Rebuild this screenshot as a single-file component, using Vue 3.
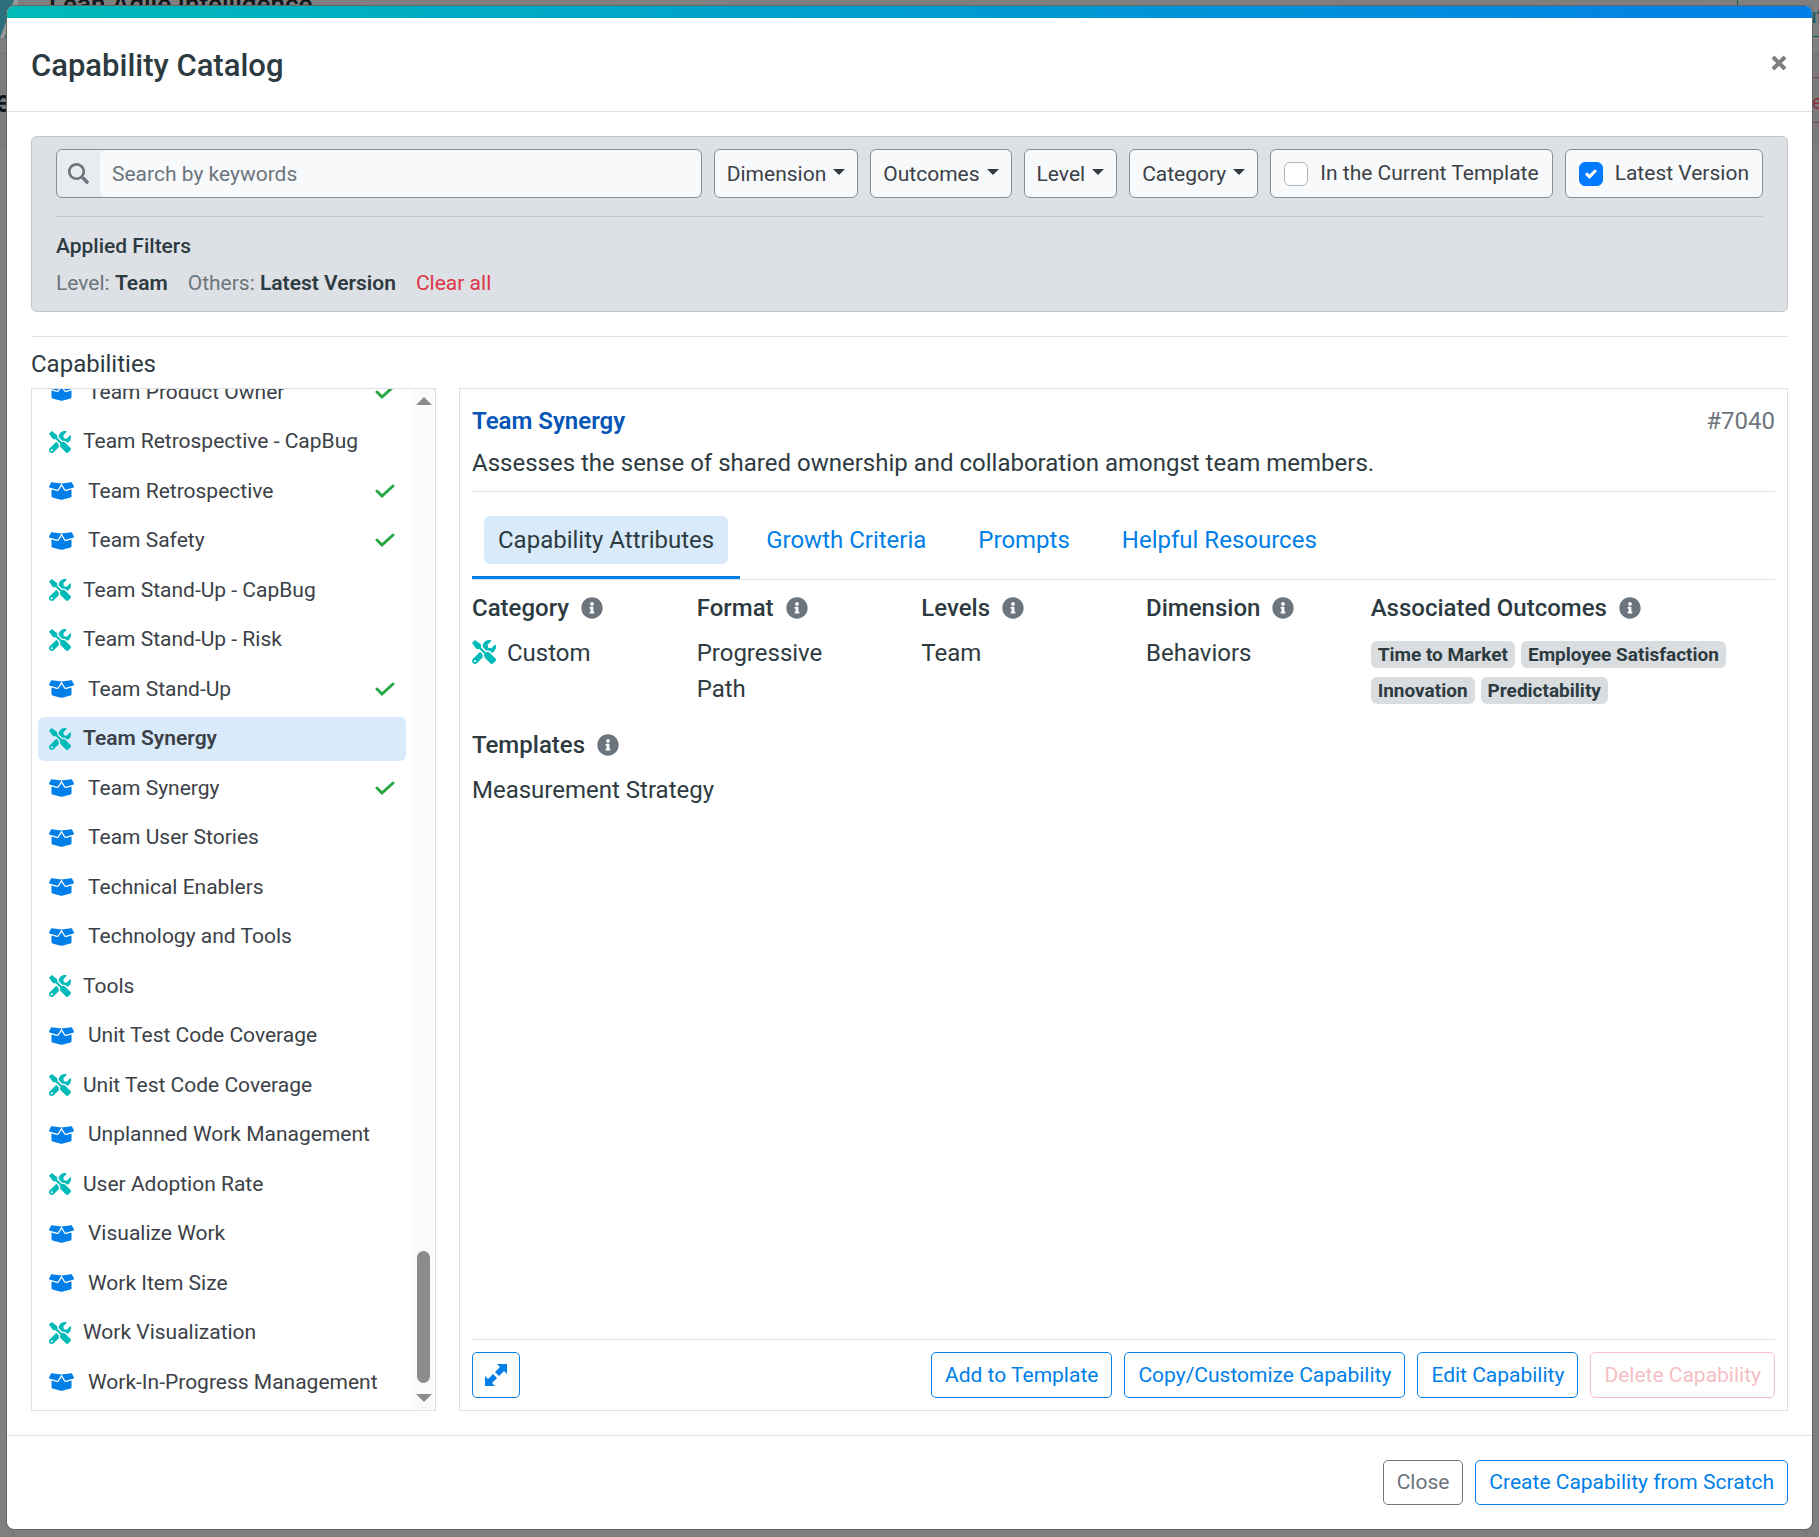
<script setup>
import { ref } from 'vue'

const capabilities = [
  { name: 'Team Product Owner', standard: true, added: true },
  { name: 'Team Retrospective - CapBug' },
  { name: 'Team Retrospective', standard: true, added: true },
  { name: 'Team Safety', standard: true, added: true },
  { name: 'Team Stand-Up - CapBug' },
  { name: 'Team Stand-Up - Risk' },
  { name: 'Team Stand-Up', standard: true, added: true },
  { name: 'Team Synergy' },
  { name: 'Team Synergy', standard: true, added: true },
  { name: 'Team User Stories', standard: true },
  { name: 'Technical Enablers', standard: true },
  { name: 'Technology and Tools', standard: true },
  { name: 'Tools' },
  { name: 'Unit Test Code Coverage', standard: true },
  { name: 'Unit Test Code Coverage' },
  { name: 'Unplanned Work Management', standard: true },
  { name: 'User Adoption Rate' },
  { name: 'Visualize Work', standard: true },
  { name: 'Work Item Size', standard: true },
  { name: 'Work Visualization' },
  { name: 'Work-In-Progress Management', standard: true },
]
const selected = ref(7)

const menus = ['Dimension', 'Outcomes', 'Level', 'Category']
const tabs = ['Capability Attributes', 'Growth Criteria', 'Prompts', 'Helpful Resources']
const activeTab = ref(0)
const outcomes = ['Time to Market', 'Employee Satisfaction', 'Innovation', 'Predictability']
const attributes = [
  { label: 'Category', value: 'Custom', icon: true },
  { label: 'Format', value: 'Progressive Path' },
  { label: 'Levels', value: 'Team' },
  { label: 'Dimension', value: 'Behaviors' },
  { label: 'Associated Outcomes', badges: outcomes },
  { label: 'Templates', value: 'Measurement Strategy' },
]

const keywords = ref('')
const inTemplate = ref(false)
const latest = ref(true)
</script>

<template>
  <div class="page">
    <svg class="defs" width="0" height="0" aria-hidden="true">
      <symbol id="i-tools" viewBox="0 0 512 512">
        <path d="M501.1 395.7L384 278.6c-23.1-23.1-57.6-27.6-85.4-13.9L192 158.1V96L64 0 0 64l96 128h62.1l106.6 106.6c-13.6 27.8-9.2 62.3 13.9 85.4l117.1 117.1c14.6 14.6 38.2 14.6 52.7 0l52.7-52.7c14.5-14.6 14.5-38.2 0-52.7zM331.7 225c28.3 0 54.9 11 74.9 31l19.4 19.4c15.8-6.9 30.8-16.5 43.8-29.5 37.1-37.1 49.7-89.3 37.9-136.7-2.2-9-13.5-12.1-20.1-5.5l-74.4 74.4-67.9-11.3L334 98.9l74.4-74.4c6.6-6.6 3.4-17.9-5.7-20.2-47.4-11.7-99.6.9-136.6 37.9-28.5 28.5-41.9 66.1-41.2 103.6l82.1 82.1c8.1-1.9 16.5-2.9 24.7-2.9zm-103.9 82l-56.7-56.7L18.7 402.8c-25 25-25 65.5 0 90.5s65.5 25 90.5 0l123.6-123.6c-7.6-19.9-9.9-41.6-5-62.7zM64 472c-13.2 0-24-10.8-24-24 0-13.3 10.7-24 24-24s24 10.7 24 24c0 13.2-10.7 24-24 24z" />
      </symbol>
      <symbol id="i-box" viewBox="0 0 640 512">
        <path d="M425.7 256c-16.9 0-32.8-9-41.4-23.4L320 126l-64.2 106.6c-8.7 14.5-24.6 23.5-41.5 23.5-4.5 0-9-.6-13.3-1.9L64 215v178c0 14.7 10 27.5 24.2 31l216.2 54.1c10.2 2.5 20.9 2.5 31 0L551.8 424c14.2-3.6 24.2-16.4 24.2-31V215l-137 39.1c-4.3 1.3-8.8 1.9-13.3 1.9zm212.6-112.2L586.8 41c-3.1-6.2-9.8-9.800-16.7-8.900L320 64l91.7 152.1c3.8 6.3 11.4 9.3 18.5 7.3l197.9-56.5c9.900-2.900 14.700-13.900 10.200-23.100zM53.2 41L1.7 143.8c-4.6 9.2.3 20.2 10.1 23l197.9 56.5c7.1 2 14.7-1 18.5-7.3L320 64 69.8 32.1c-6.9-.8-13.500 2.700-16.600 8.900z" />
      </symbol>
      <symbol id="i-info" viewBox="0 0 512 512">
        <path d="M256 8C119.043 8 8 119.083 8 256c0 136.997 111.043 248 248 248s248-111.003 248-248C504 119.083 392.957 8 256 8zm0 110c23.196 0 42 18.804 42 42s-18.804 42-42 42-42-18.804-42-42 18.804-42 42-42zm56 254c0 6.627-5.373 12-12 12h-88c-6.627 0-12-5.373-12-12v-24c0-6.627 5.373-12 12-12h12v-64h-12c-6.627 0-12-5.373-12-12v-24c0-6.627 5.373-12 12-12h64c6.627 0 12 5.373 12 12v100h12c6.627 0 12 5.373 12 12v24z" />
      </symbol>
    </svg>

    <div class="backdrop" aria-hidden="true">
      <div class="topbar">
        <svg class="logo" viewBox="0 0 18 38"><path d="M0 0H18L6 38H0Z" fill="#2d6f7c" /><path d="M0 38L14 0H18V4L4 38Z" fill="#999" /></svg>
        <span class="brand">Lean Agile Intelligence</span>
        <span class="ghost teal">ut</span>
      </div>
      <div class="subbar">
        <span class="crumb">e</span>
        <span class="ghost red">te</span>
      </div>
      <div class="board"></div>
    </div>

    <section class="modal" role="dialog" aria-labelledby="modal-title">
      <header class="modal-header">
        <h1 id="modal-title">Capability Catalog</h1>
        <button class="dismiss" type="button" aria-label="Dismiss">
          <svg viewBox="0 0 16 16"><path d="M2 2L14 14M14 2L2 14" stroke="currentColor" stroke-width="4" /></svg>
        </button>
      </header>

      <div class="modal-body">
        <div class="filters">
          <div class="filter-row">
            <div class="search">
              <label for="keywords" aria-label="Keywords">
                <svg viewBox="0 0 512 512"><path d="M505 442.700L405.300 343c-4.500-4.500-10.600-7-17-7H372c27.600-35.300 44-79.700 44-128C416 93.100 322.900 0 208 0S0 93.100 0 208s93.100 208 208 208c48.300 0 92.700-16.400 128-44v16.300c0 6.400 2.500 12.500 7 17l99.700 99.700c9.400 9.400 24.600 9.400 33.900 0l28.300-28.300c9.400-9.400 9.400-24.600.1-34zM208 352c-79.500 0-144-64.300-144-144 0-79.500 64.300-144 144-144 79.500 0 144 64.300 144 144 0 79.500-64.300 144-144 144z" /></svg>
              </label>
              <input id="keywords" v-model="keywords" type="text" placeholder="Search by keywords">
            </div>
            <button v-for="m in menus" :key="m" class="menu" type="button" aria-haspopup="true">{{ m }}<span class="caret"></span></button>
            <label class="toggle"><input v-model="inTemplate" type="checkbox"><span>In the Current Template</span></label>
            <label class="toggle"><input v-model="latest" type="checkbox"><span>Latest Version</span></label>
          </div>
          <div class="applied">
            <h2>Applied Filters</h2>
            <p>
              <span><span class="muted">Level:</span> <b>Team</b></span>
              <span><span class="muted">Others:</span> <b>Latest Version</b></span>
              <a href="#" class="clear">Clear all</a>
            </p>
          </div>
        </div>

        <hr class="rule">

        <h2 class="list-title">Capabilities</h2>
        <div class="columns">
          <div class="list-panel">
            <ul class="list">
              <li v-for="(c, i) in capabilities" :key="i">
                <button type="button" class="item" :class="{ active: i === selected }" @click="selected = i">
                  <svg v-if="c.standard" class="box"><use href="#i-box" /></svg>
                  <svg v-else class="tools"><use href="#i-tools" /></svg>
                  <span class="item-name">{{ c.name }}</span>
                  <svg v-if="c.added" class="check" viewBox="0 0 20 15"><path d="M2 7L7 12L18 2" /></svg>
                </button>
              </li>
            </ul>
            <div class="scrollbar" aria-hidden="true">
              <span class="arrow up"></span>
              <span class="thumb"></span>
              <span class="arrow down"></span>
            </div>
          </div>

          <article class="detail">
            <header class="detail-header">
              <div class="detail-title">
                <h3>Team Synergy</h3>
                <span class="muted">#7040</span>
              </div>
              <p>Assesses the sense of shared ownership and collaboration amongst team members.</p>
            </header>
            <nav class="tabs">
              <a v-for="(t, i) in tabs" :key="t" href="#" :class="{ active: i === activeTab }" @click.prevent="activeTab = i"><span>{{ t }}</span></a>
            </nav>
            <div class="attributes">
              <section v-for="a in attributes" :key="a.label" :class="{ wide: a.badges || a.label === 'Templates' }">
                <h4>{{ a.label }}<svg class="info"><use href="#i-info" /></svg></h4>
                <div v-if="a.badges" class="badges">
                  <span v-for="b in a.badges" :key="b" class="badge">{{ b }}</span>
                </div>
                <p v-else><svg v-if="a.icon" class="tools"><use href="#i-tools" /></svg>{{ a.value }}</p>
              </section>
            </div>
            <footer class="detail-footer">
              <button type="button" class="btn expand" aria-label="Expand">
                <svg viewBox="0 0 22 22"><path d="M12 0H22V10L19 7L14 12L10 8L15 3Z" /><path d="M10 22H0V12L3 15L8 10L12 14L7 19Z" /></svg>
              </button>
              <button type="button" class="btn">Add to Template</button>
              <button type="button" class="btn">Copy/Customize Capability</button>
              <button type="button" class="btn">Edit Capability</button>
              <button type="button" class="btn danger" disabled>Delete Capability</button>
            </footer>
          </article>
        </div>
      </div>

      <footer class="modal-footer">
        <button type="button" class="btn grey">Close</button>
        <button type="button" class="btn">Create Capability from Scratch</button>
      </footer>
    </section>
  </div>
</template>

<style>
body {
  margin: 0;
  background: #808080;
}
</style>

<style scoped>
* {
  box-sizing: border-box;
}
.page {
  position: relative;
  min-height: 100vh;
  padding: 6px 7px 8px;
  display: flex;
  overflow: hidden;
  font-family: Roboto, "Open Sans", sans-serif;
  font-size: 24px;
  line-height: 36px;
  color: #2d3b41;
}
h1, h2, h3, h4, p, ul {
  margin: 0;
  padding: 0;
}
button, input {
  font-family: inherit;
  color: inherit;
}
.defs {
  position: absolute;
}

/* dimmed page behind the dialog */
.backdrop {
  position: absolute;
  inset: 0;
  display: flex;
  flex-direction: column;
  background: #7f7f7f;
  color: #10151a;
}
.topbar {
  position: relative;
  height: 54px;
  border-bottom: 1px solid #727272;
}
.subbar {
  position: relative;
  height: 93px;
  background: #7b7b7b;
}
.logo {
  position: absolute;
  left: 0;
  top: 0;
  width: 18px;
  height: 38px;
}
.brand {
  position: absolute;
  left: 49px;
  top: -14px;
  font-size: 26px;
  font-weight: 500;
}
.crumb {
  position: absolute;
  left: -5px;
  top: 30px;
  font-size: 31px;
  font-weight: 500;
}
.ghost {
  position: absolute;
  right: -60px;
  height: 46px;
  padding-left: 67px;
  width: 142px;
  border: 1px solid;
  line-height: 48px;
  font-size: 21px;
}
.teal {
  top: -9px;
  color: #045c5c;
}
.red {
  top: 23px;
  color: #83383f;
}
.board {
  flex: 1;
  margin: 0 12px;
  border: solid #707070;
  border-width: 0 1px;
}

.modal {
  position: relative;
  flex: 1;
  min-width: 0;
  display: flex;
  flex-direction: column;
  border-radius: 7px;
  overflow: hidden;
  background: #fff;
  box-shadow: 0 0 0 1px #666;
}
.modal::before {
  content: "";
  height: 12px;
  background: linear-gradient(to right, #00bab8, #007fe8);
}
.modal-header {
  display: flex;
  justify-content: space-between;
  align-items: flex-start;
  padding: 25px 24px 23px;
  border-bottom: 1px solid #dee2e6;
}
h1 {
  font-size: 31px;
  font-weight: 500;
  line-height: 45px;
}
.dismiss {
  display: flex;
  margin: 7px 0;
  padding: 5px 1px;
  border: 0;
  background: none;
  color: #7f7f7f;
}
.dismiss svg {
  width: 16px;
  height: 16px;
}
.modal-body {
  flex: 1;
  display: flex;
  flex-direction: column;
  padding: 24px;
}

.filters {
  padding: 12px 24px;
  border: 1px solid #c1c6cb;
  border-radius: 6px;
  background: #dde1e6;
}
.filter-row {
  display: flex;
  gap: 12px;
  padding-bottom: 18px;
  border-bottom: 1px solid #c4c9ce;
  font-size: 21px;
  line-height: 31px;
  color: #3b4147;
}
.search {
  flex: 1;
  min-width: 0;
  height: 49px;
  display: flex;
  border: 1px solid #868e96;
  border-radius: 6px;
  background: #e9ecef;
  overflow: hidden;
}
.search label {
  width: 43px;
  display: flex;
  align-items: center;
  justify-content: center;
  fill: #6c757d;
}
.search label svg {
  width: 21px;
  height: 21px;
}
.search input {
  flex: 1;
  min-width: 0;
  padding: 0 12px;
  border: 0;
  border-radius: 6px;
  background: #f8f9fa;
  font-size: 21px;
}
.search input::placeholder {
  color: #6c757d;
}
.menu, .toggle {
  display: flex;
  align-items: center;
  padding: 0 12px;
  border: 1px solid #868e96;
  border-radius: 6px;
  background: #f8f9fa;
  font-size: 21px;
  white-space: nowrap;
}
.caret {
  margin: 0 0 4px 7px;
  border: 6px solid transparent;
  border-top: 6px solid #343a40;
  border-bottom: 0;
}
.toggle {
  gap: 12px;
  padding: 0 13px;
}
.toggle input {
  appearance: none;
  width: 24px;
  height: 24px;
  margin: 0;
  border: 1px solid #adb5bd;
  border-radius: 6px;
  background: #fff;
}
.toggle input:checked {
  border-color: #007bff;
  background: #007bff url("data:image/svg+xml,%3csvg xmlns='http://www.w3.org/2000/svg' viewBox='0 0 8 8'%3e%3cpath fill='%23fff' d='M6.564.75l-3.59 3.612-1.538-1.55L0 4.26l2.974 2.99L8 2.193z'/%3e%3c/svg%3e") center / 12px no-repeat;
}
.applied {
  padding-top: 14px;
  font-size: 21px;
  line-height: 31px;
}
.applied h2 {
  font-size: 21px;
  font-weight: 500;
}
.applied p {
  display: flex;
  gap: 20px;
  padding-top: 6px;
}
b {
  font-weight: 600;
}
.muted {
  color: #6c757d;
}
.clear {
  color: #dc3545;
  text-decoration: none;
}
.rule {
  width: 100%;
  margin: 24px 0 9px;
  border: 0;
  border-top: 1px solid #dee2e6;
}
.list-title {
  margin-bottom: 6px;
  font-size: 24px;
  font-weight: 400;
}

.columns {
  flex: 1;
  display: grid;
  grid-template-columns: minmax(0, 405fr) minmax(0, 1329fr);
  gap: 23px;
}
.list-panel, .detail {
  border: 1px solid #dee2e6;
}
.list-panel {
  display: flex;
}
.list {
  flex: 1;
  min-width: 0;
  height: 0;
  min-height: 100%;
  display: flex;
  flex-direction: column;
  justify-content: flex-end;
  overflow: hidden;
  padding: 0 6px;
  list-style: none;
  font-size: 21px;
  line-height: 150%;
}
.list li {
  margin-bottom: 6px;
}
.item {
  width: 100%;
  display: flex;
  align-items: center;
  padding: 6px 11px;
  border: 0;
  border-radius: 6px;
  background: none;
  font-size: 21px;
  line-height: inherit;
  text-align: left;
  white-space: nowrap;
  color: #3b4147;
}
.item.active {
  background: #d9ebfb;
  font-weight: 600;
}
.item-name {
  flex: 1;
}
.box {
  width: 25px;
  height: 20px;
  margin-right: 14px;
  fill: #007fe8;
}
.tools {
  width: 22px;
  height: 22px;
  margin-right: 12px;
  fill: #00bab8;
}
.check {
  width: 20px;
  height: 15px;
  fill: none;
  stroke: #28a745;
  stroke-width: 3;
  stroke-linecap: round;
}
.scrollbar {
  width: 23px;
  display: flex;
  flex-direction: column;
  align-items: center;
  padding: 8px 0;
  background: #fafafa;
}
.arrow {
  border: 8px solid transparent;
}
.up {
  border-top: 0;
  border-bottom-color: #8b8b8b;
  margin-bottom: auto;
}
.thumb {
  width: 13px;
  height: 132px;
  margin-bottom: 11px;
  border-radius: 7px;
  background: #8b8b8b;
}
.down {
  border-bottom: 0;
  border-top-color: #8b8b8b;
}

.detail {
  display: flex;
  flex-direction: column;
  padding: 12px;
}
.detail-header {
  padding: 2px 0 10px;
  border-bottom: 1px solid #dee2e6;
}
.detail-title {
  display: flex;
  justify-content: space-between;
  margin-bottom: 6px;
}
h3 {
  font-size: 24px;
  font-weight: 600;
  color: #0656b8;
}
.tabs {
  display: flex;
  margin-top: 12px;
  border-bottom: 1px solid #dee2e6;
}
.tabs a {
  padding: 12px;
  border-bottom: 3px solid transparent;
  color: #007fe8;
  text-decoration: none;
}
.tabs a.active {
  border-color: #007fe8;
  color: #2d3b41;
}
.tabs span {
  display: block;
  padding: 6px 14px;
  border-radius: 6px;
}
.tabs .active span {
  background: #d9ebfb;
}
.attributes {
  flex: 1;
  display: grid;
  grid-template-columns: repeat(6, minmax(0, 1fr));
  align-content: start;
  gap: 20px 45px;
  padding-top: 10px;
}
.wide {
  grid-column: span 2;
}
h4 {
  display: flex;
  align-items: center;
  margin-bottom: 9px;
  font-size: 24px;
  font-weight: 500;
  white-space: nowrap;
}
.info {
  width: 22px;
  height: 22px;
  margin-left: 12px;
  fill: #6c757d;
}
.attributes .tools {
  width: 24px;
  height: 24px;
  margin-right: 11px;
  vertical-align: -3px;
}
.badges {
  display: flex;
  flex-wrap: wrap;
  gap: 9px 6px;
  padding-top: 6px;
}
.badge {
  padding: 0 7px;
  border-radius: 6px;
  background: #dadde0;
  font-size: 19px;
  font-weight: 700;
  line-height: 27px;
}
.detail-footer {
  display: flex;
  gap: 12px;
  padding-top: 12px;
  border-top: 1px solid #dee2e6;
}
.btn {
  height: 45px;
  padding: 0 13px;
  border: 1px solid #007fe8;
  border-radius: 5px;
  background: #fff;
  color: #007fe8;
  font-size: 21px;
  line-height: 31px;
  white-space: nowrap;
}
.detail-footer .btn {
  height: 46px;
}
.detail-footer .expand {
  margin-right: auto;
  padding: 0 12px;
  display: flex;
  align-items: center;
}
.expand svg {
  width: 22px;
  height: 22px;
  fill: #007fe8;
}
.detail-footer .danger {
  border-color: #f4bfc5;
  color: #f4bfc5;
}
.grey {
  border-color: #6c757d;
  color: #6c757d;
}
.modal-footer {
  display: flex;
  justify-content: flex-end;
  gap: 12px;
  padding: 24px;
  border-top: 1px solid #dee2e6;
}
</style>
